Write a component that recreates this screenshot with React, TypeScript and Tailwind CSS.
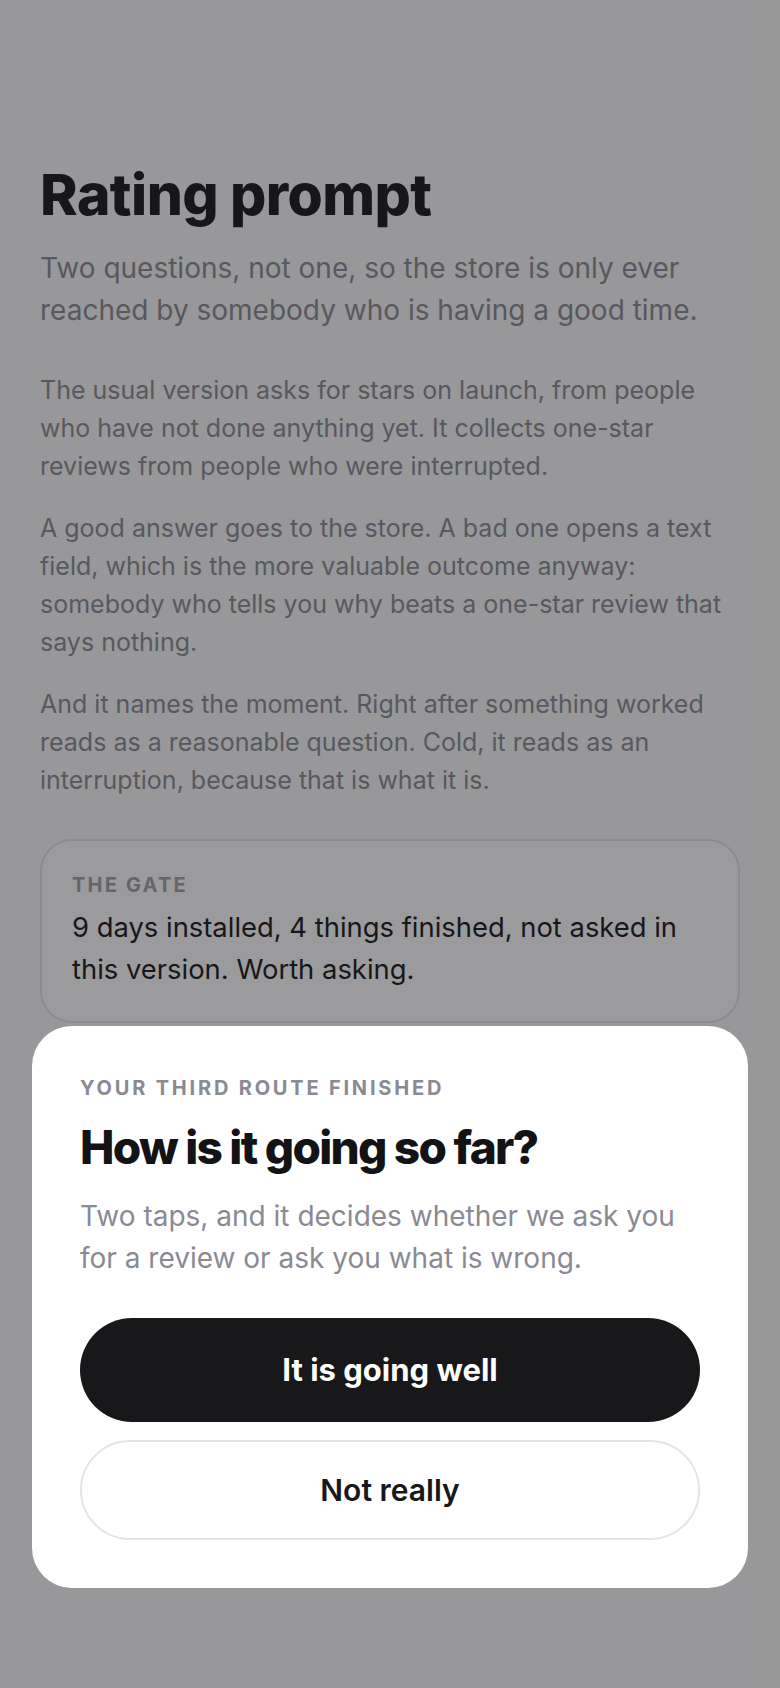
import React from "react";

export default function App() {
  return (
    <div
      className="relative min-h-[1688px] w-full overflow-hidden bg-[#fafafa] text-[#18181b]"
      style={{ fontFamily: "Inter, 'Noto Sans', sans-serif" }}
    >
      <main className="px-10 pt-[164px]">
        <h1 className="text-[57px] font-extrabold leading-[1.1] tracking-[-0.01em] text-[#18181b]">
          Rating prompt
        </h1>
        <p className="mt-[20px] text-[28px] leading-[42px] text-[#8a8a93]">
          Two questions, not one, so the store is only ever reached by somebody who is having a good time.
        </p>
        <div className="mt-[40px] flex flex-col gap-[24px] text-[25px] leading-[38px] text-[#8a8a93]">
          <p>
            The usual version asks for stars on launch, from people who have not done anything yet. It collects
            one-star reviews from people who were interrupted.
          </p>
          <p>
            A good answer goes to the store. A bad one opens a text field, which is the more valuable outcome
            anyway: somebody who tells you why beats a one-star review that says nothing.
          </p>
          <p>
            And it names the moment. Right after something worked reads as a reasonable question. Cold, it reads
            as an interruption, because that is what it is.
          </p>
        </div>
        <section className="mt-[40px] rounded-[32px] border-2 border-[#e4e4e7] bg-white px-[30px] pb-[31px] pt-[32px]">
          <div className="text-[20px] font-bold uppercase leading-[24px] tracking-[0.11em] text-[#a1a1aa]">
            The gate
          </div>
          <p className="mt-[9px] text-[27.4px] leading-[42px] text-[#18181b]">
            9 days installed, 4 things finished, not asked in this version. Worth asking.
          </p>
        </section>
      </main>

      <div className="absolute inset-0 bg-[#18181b]/[0.43]" />

      <div className="absolute bottom-[100px] left-8 right-8 rounded-[40px] bg-white px-12 pb-12 pt-[50px]">
        <div className="text-[20px] font-bold uppercase leading-[24px] tracking-[0.14em] text-[#8a8a93]">
          Your third route finished
        </div>
        <h2 className="mt-[21px] text-[46px] font-extrabold leading-[1.15] tracking-[-0.038em] text-[#131316]">
          How is it going so far?
        </h2>
        <p className="mt-[21px] text-[28px] leading-[42px] text-[#8a8a93]">
          Two taps, and it decides whether we ask you for a review or ask you what is wrong.
        </p>
        <div className="mt-[39px] flex flex-col gap-[18px]">
          <button className="flex h-[104px] w-full items-center justify-center rounded-full bg-[#18181b] text-[31px] font-bold text-white">
            It is going well
          </button>
          <button className="flex h-[100px] w-full items-center justify-center rounded-full border-2 border-[#e4e4e7] bg-white text-[30px] font-semibold text-[#18181b]">
            Not really
          </button>
        </div>
      </div>
    </div>
  );
}
